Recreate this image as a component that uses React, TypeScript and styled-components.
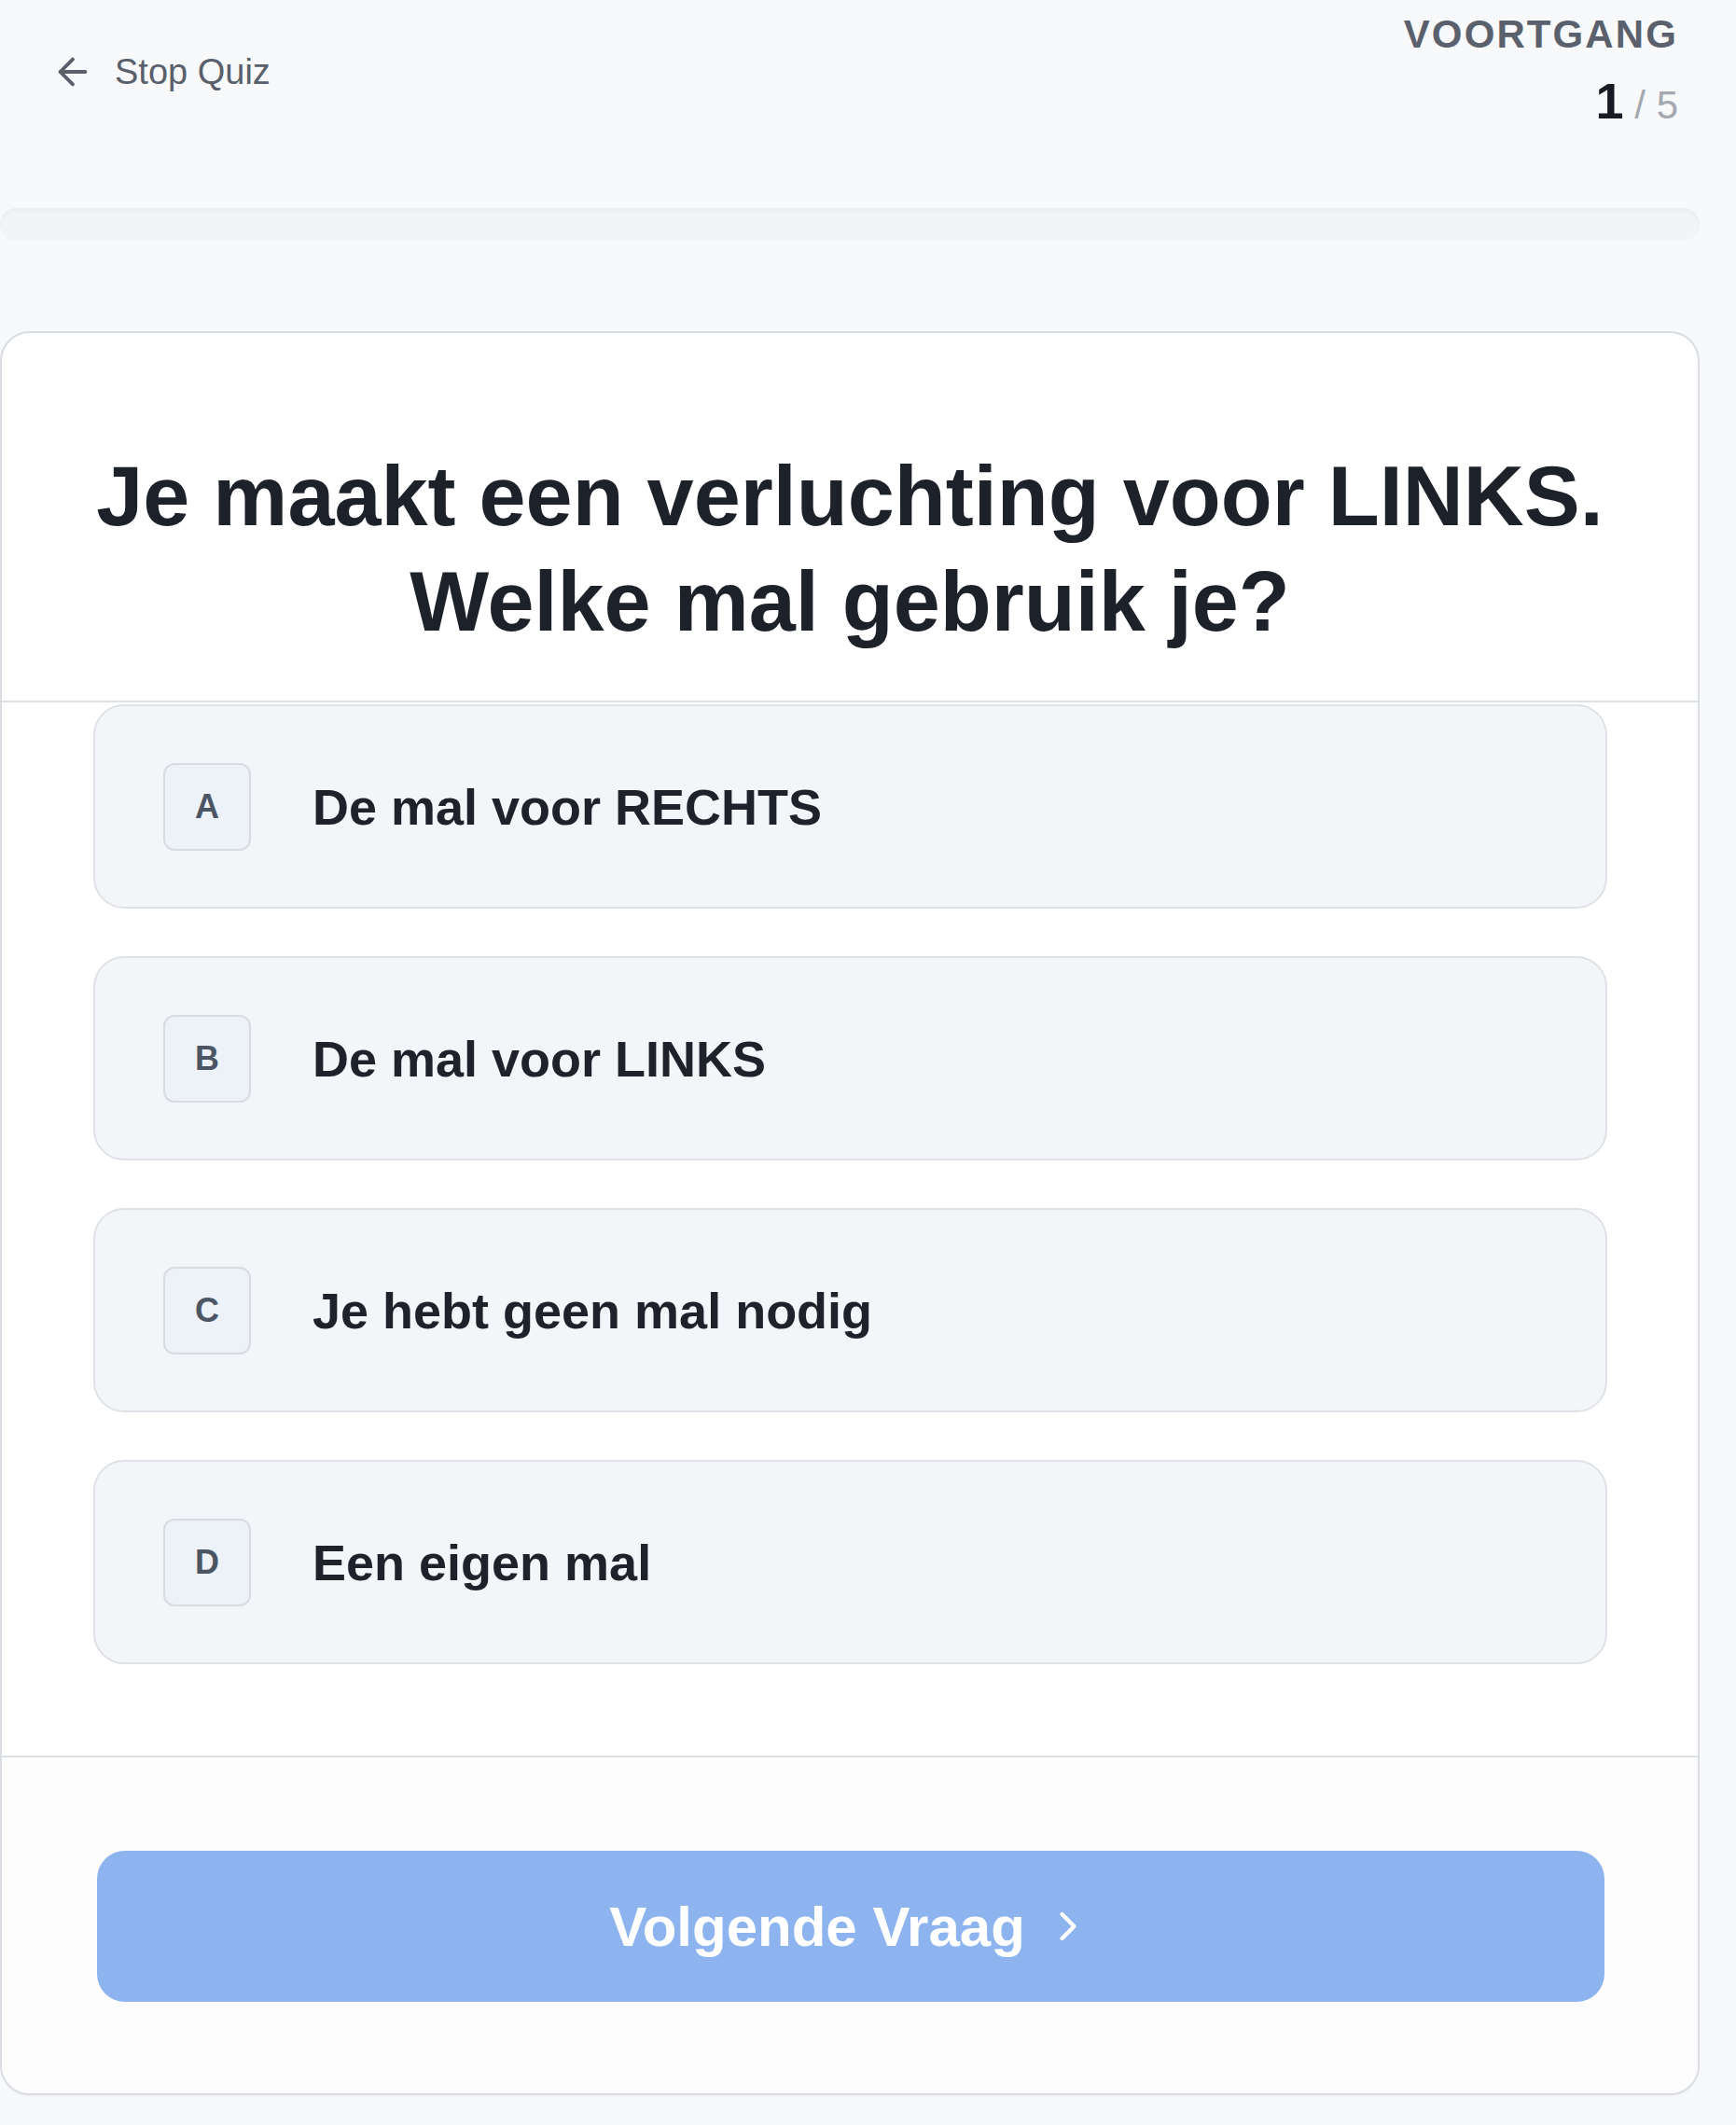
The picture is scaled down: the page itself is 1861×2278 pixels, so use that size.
import React from "react";
import styled, { createGlobalStyle } from "styled-components";
import { ArrowLeft, ChevronRight } from "lucide-react";

const GlobalStyle = createGlobalStyle`
  html, body {
    margin: 0;
    padding: 0;
    background: #f8f9fb;
  }
  body {
    font-family: "Liberation Sans", Arial, Helvetica, sans-serif;
    -webkit-font-smoothing: antialiased;
  }
  * { box-sizing: border-box; }
`;

const Page = styled.div`
  width: 1822px;
  min-height: 2278px;
  display: flex;
  flex-direction: column;
`;

const Header = styled.header`
  height: 223px;
  display: flex;
  justify-content: space-between;
  align-items: flex-start;
  padding: 0 23px 0 55px;
`;

const StopButton = styled.button`
  margin-top: 54px;
  display: flex;
  align-items: center;
  gap: 22px;
  padding: 0;
  border: none;
  background: none;
  font-family: inherit;
  font-size: 38px;
  line-height: 46px;
  color: #595f6b;
  cursor: pointer;
`;

const Progress = styled.div`
  margin-top: 12px;
  display: flex;
  flex-direction: column;
  align-items: flex-end;
`;

const ProgressLabel = styled.div`
  font-size: 42px;
  line-height: 50px;
  font-weight: 700;
  letter-spacing: 0.05em;
  color: #5a616d;
  text-transform: uppercase;
`;

const Count = styled.div`
  margin-top: 19px;
  font-size: 54px;
  line-height: 54px;
  font-weight: 700;
  color: #171b23;
`;

const Total = styled.span`
  font-size: 42px;
  font-weight: 400;
  color: #a4a8af;
`;

const Track = styled.div`
  height: 35px;
  border-radius: 999px;
  background: #f2f4f7;
  box-shadow: inset 0 3px 4px rgba(15, 23, 42, 0.035);
  margin-bottom: 97px;
`;

const Card = styled.section`
  border: 2px solid #d9dde2;
  border-radius: 32px;
  background: #ffffff;
  overflow: hidden;
  box-shadow: 0 2px 0 rgba(15, 23, 42, 0.03);
`;

const QuestionHead = styled.div`
  padding: 119px 60px 50px;
  border-bottom: 2px solid #dcdfe4;
  text-align: center;
`;

const Question = styled.h1`
  margin: 0;
  font-size: 90px;
  line-height: 1.25;
  font-weight: 700;
  color: #1d212a;
`;

const OptionList = styled.div`
  display: flex;
  flex-direction: column;
  gap: 51px;
  padding: 2px 97px 98px 98px;
`;

const Option = styled.button`
  display: flex;
  align-items: center;
  gap: 66px;
  height: 219px;
  width: 100%;
  padding: 0 0 0 73px;
  border: 2px solid #dee1e6;
  border-radius: 33px;
  background: #f3f5f8;
  font-family: inherit;
  font-size: 54px;
  font-weight: 700;
  color: #1d222b;
  text-align: left;
  cursor: pointer;
`;

const Badge = styled.span`
  flex-shrink: 0;
  width: 94px;
  height: 94px;
  display: flex;
  align-items: center;
  justify-content: center;
  border: 2px solid #d8dce2;
  border-radius: 12px;
  background: #edf1f8;
  font-size: 36px;
  font-weight: 700;
  color: #4b5563;
`;

const Footer = styled.div`
  border-top: 2px solid #dcdfe4;
  padding: 100px 100px 98px 102px;
  background: #fdfdfe;
`;

const NextButton = styled.button`
  width: 100%;
  height: 162px;
  display: flex;
  align-items: center;
  justify-content: center;
  gap: 20px;
  border: none;
  border-radius: 30px;
  background: #8db4ef;
  color: #ffffff;
  font-family: inherit;
  font-size: 60px;
  font-weight: 700;
  cursor: not-allowed;
`;

const options = [
  { key: "A", label: "De mal voor RECHTS" },
  { key: "B", label: "De mal voor LINKS" },
  { key: "C", label: "Je hebt geen mal nodig" },
  { key: "D", label: "Een eigen mal" },
];

export default function App() {
  return (
    <>
      <GlobalStyle />
      <Page>
        <Header>
          <StopButton>
            <ArrowLeft size={46} strokeWidth={2} />
            Stop Quiz
          </StopButton>
          <Progress>
            <ProgressLabel>Voortgang</ProgressLabel>
            <Count>
              1<Total> / 5</Total>
            </Count>
          </Progress>
        </Header>
        <Track />
        <Card>
          <QuestionHead>
            <Question>
              Je maakt een verluchting voor LINKS. Welke mal gebruik je?
            </Question>
          </QuestionHead>
          <OptionList>
            {options.map((o) => (
              <Option key={o.key}>
                <Badge>{o.key}</Badge>
                {o.label}
              </Option>
            ))}
          </OptionList>
          <Footer>
            <NextButton>
              Volgende Vraag
              <ChevronRight size={52} strokeWidth={2} />
            </NextButton>
          </Footer>
        </Card>
      </Page>
    </>
  );
}
